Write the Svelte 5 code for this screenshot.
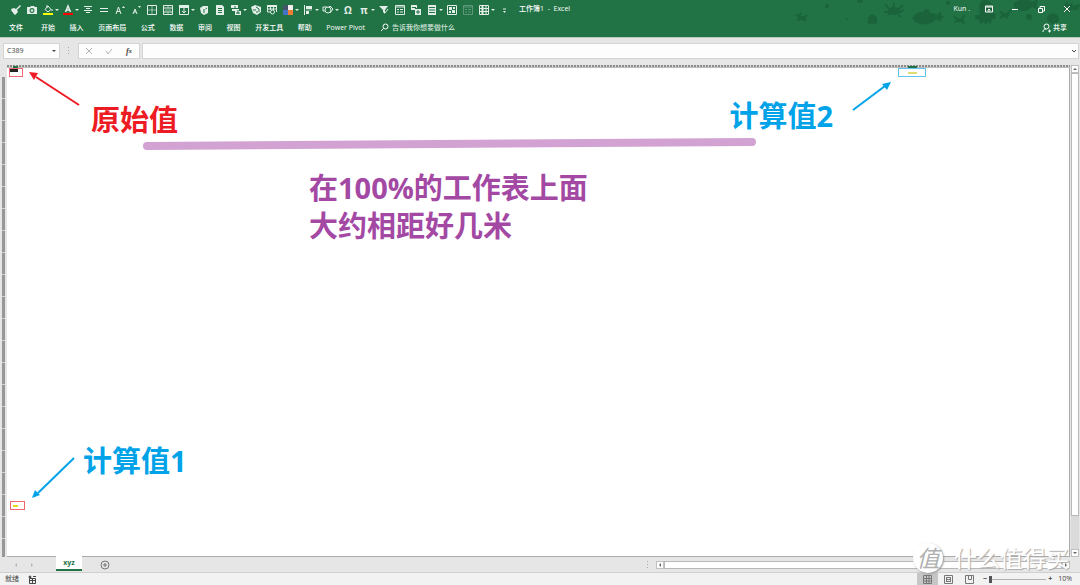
<script>
  let cellName = 'C389';
  let formula = '';
  let search = '';
  let zoom = 10;

  // quick access toolbar, in display order
  const tools = [
    { name: 'Format painter', icon: 'brush' },
    { name: 'Camera', icon: 'camera' },
    { name: 'Fill color', icon: 'fill', menu: true },
    { name: 'Font color', icon: 'font', menu: true },
    { name: 'Center', icon: 'center' },
    { name: 'Middle', icon: 'middle' },
    { name: 'Increase font', icon: 'grow' },
    { name: 'Decrease font', icon: 'shrink' },
    { name: 'Borders', icon: 'borders' },
    { name: 'Merge', icon: 'merge' },
    { name: 'Freeze', icon: 'freeze', menu: true },
    { name: 'Pivot', icon: 'cube' },
    { name: 'Page', icon: 'page' },
    { name: 'Paste', icon: 'paste', menu: true },
    { name: 'Data model', icon: 'model' },
    { name: 'Find table', icon: 'find' },
    { name: 'Colors', icon: 'colors', menu: true },
    { name: 'Align', icon: 'align', menu: true },
    { name: 'Shapes', icon: 'shapes', menu: true },
    { name: 'Symbol', text: 'Ω' },
    { name: 'Equation', text: 'π', menu: true },
    { name: 'Filter', icon: 'filter' },
    { name: 'Form', icon: 'form' },
    { name: 'Copy', icon: 'copy' },
    { name: 'Calculate', icon: 'calc', menu: true },
    { name: 'Select objects', icon: 'select' },
    { name: 'Outline', icon: 'form', off: true },
    { name: 'Table', icon: 'table', menu: true }
  ];

  const menus = ['开始', '插入', '页面布局', '公式', '数据', '审阅', '视图', '开发工具', '帮助', 'Power Pivot'];
</script>

<div class="excel">
  <header>
    <svg class="sea" width="300" height="37" viewBox="0 0 300 37" aria-hidden="true">
      <circle cx="47" cy="6" r="2" />
      <circle cx="80" cy="0" r="3" />
      <circle cx="67" cy="19" r="1" />
      <circle cx="168" cy="3" r="2" />
      <circle cx="249" cy="17" r="3" />
      <path d="M88 19c0-6 9-6 9 0v3l1 2-3-1-1 2-2-2-2 2-1-2-2 0 1-2z" />
      <path d="M133 17c2-4 6-5 10-5l2-3 4 1 1 3c3 0 5 1 7 2l4-4 0 4 3 2-3 2 0 3-5-3c-6 8-21 7-24-2z" />
      <path d="M200 11c-5-14 15-15 12 0l4 4-1 4-3 0-1 5-3-2-2 3-3-3-3 2-1-4-4-1 0-4 4 0z" />
      <path d="M233 5c3-6 14-7 19-3l6-3-1 6 1 5-6-3c-5 6-16 5-19-2z" />
      <path d="M267 18c2-7 12-6 12 2l-2 3c-3 2-9 1-10-5z" />
      <path d="M284 5l3-4 1 4 5-3-1 4 8-2-2 6-7 0-2 3-5-5z" />
      <g class="crab">
        <path d="M16 14l3 3 2-4M27 15l-3 3M17 20l3-1M26 21l-2-2" />
        <ellipse cx="22" cy="18" rx="4" ry="2" />
        <path d="M105 4l4 5M114 3l-1 6M123 5l-5 5M104 12l6 0M118 13l6-3M108 15l3-3M118 15l3 2" />
        <ellipse cx="114" cy="11" rx="6" ry="4" />
        <path d="M174 16l3 3M185 15l-4 5M174 22l4-1M182 23l3-1" />
        <ellipse cx="180" cy="20" rx="4" ry="2" />
        <path d="M220 11l3 3M231 10l-4 4M220 18l4-2M228 18l-2-2" />
        <ellipse cx="225" cy="15" rx="4" ry="2" />
      </g>
    </svg>

    <div class="titlebar">
      <div class="tools">
        {#each tools as tool}
          <button class="tool" class:off={tool.off} aria-label={tool.name}>
            {#if tool.text}
              <span class="letter">{tool.text}</span>
            {:else}
            <svg width="12" height="12" viewBox="0 0 12 12">
              {#if tool.icon == 'brush'}
                <path class="solid" d="M1 5l3-1 2 1 4-4 1 1-4 4 1 2-3 3-2-2 0-1-1 0z" />
              {:else if tool.icon == 'camera'}
                <path class="solid" fill-rule="evenodd" d="M1 3h3l1-1h3l1 1h2v7H1zM6 4a2.500 2.500 0 1 0 .01 0z" />
                <circle class="solid" cx="6" cy="6.500" r="1.300" />
              {:else if tool.icon == 'fill'}
                <path d="M3 5.500L6 2l3 3.500L6 8zM5 1v3M10 5v2" />
                <rect x="1" y="9" width="10" height="2" fill="#ffff00" />
              {:else if tool.icon == 'font'}
                <path class="heavy" d="M3.500 8L6 2l2.500 6M4.500 6h3" />
                <rect x="1" y="9" width="10" height="2" fill="#ff0000" />
              {:else if tool.icon == 'center'}
                <path d="M2 2.500h8M4 4.500h4M2 6.500h8M4 8.500h4" />
              {:else if tool.icon == 'middle'}
                <path d="M2 4.500h8M2 7.500h8" />
              {:else if tool.icon == 'grow'}
                <path d="M2 10L4.500 3 7 10M3 7.500h3" />
                <path class="solid" d="M8 4l1.500-2L11 4z" />
              {:else if tool.icon == 'shrink'}
                <path d="M3 10L5 5l2 5M4 8h2" />
                <path class="solid" d="M8 2h3L9.500 4z" />
              {:else if tool.icon == 'borders'}
                <path d="M1.500 1.500h9v9h-9z" />
                <path class="thin" d="M6 2v8M2 6h8" />
              {:else if tool.icon == 'merge'}
                <path d="M1.500 1.500h9v9h-9zM2 4h8M2 8h8" />
                <path class="thin" d="M6 2v2M6 8v2M3 6h6" />
              {:else if tool.icon == 'freeze'}
                <path d="M1.500 1.500h9v9h-9zM6 4v5M4 7l2 2 2-2" />
                <path class="solid" d="M1 1h10v3H1z" />
              {:else if tool.icon == 'cube'}
                <path class="solid" d="M2 4l3-2 5 0v7l-4 2-3-2z" />
                <path class="cut" d="M6 5v4M7.500 5L9 4" />
              {:else if tool.icon == 'page'}
                <path class="solid" d="M2 1h6l2 2v8H2z" />
                <path class="cut" d="M4 4.500h4M4 6.500h4M4 8.500h4" />
              {:else if tool.icon == 'paste'}
                <path class="solid" d="M1 1h7v3H1zM2 5h7v2H2zM5 7h6v4H5z" />
                <path class="cut" d="M5 2v2M8 6v4M6 9h4" />
              {:else if tool.icon == 'model'}
                <path class="solid" d="M1 3l4-2 6 2v5l-4 3-4-2z" />
                <path class="cut" d="M3 6h3M6 3l3 2v3M6 8h2" />
              {:else if tool.icon == 'find'}
                <path d="M1.500 3v5H4M2 5h8M4.500 3v3M7.500 3v3M10.500 3v5" />
                <path class="bold" d="M1 2h10" />
                <circle class="ring" cx="6.500" cy="8" r="2" />
              {:else if tool.icon == 'colors'}
                <rect x="1" y="1" width="5" height="5" fill="#44546a" />
                <rect x="6" y="1" width="5" height="5" fill="#f4eeee" />
                <rect x="1" y="6" width="5" height="5" fill="#4472c4" />
                <rect x="6" y="6" width="5" height="5" fill="#ed7d31" />
              {:else if tool.icon == 'align'}
                <path d="M2.500 1v10" />
                <path class="solid" d="M4 2h6v3H4zM4 7h3v3H4z" />
                <path class="thin" d="M4 6h6" />
              {:else if tool.icon == 'shapes'}
                <path d="M1 3h4v4H1zM8 2l3 3-3 4-3-4z" />
                <circle class="ring" cx="6" cy="6" r="3" />
              {:else if tool.icon == 'filter'}
                <path class="solid" d="M1 2h9L7 6v4L5 8V6z" />
                <path d="M7 9l3-4" />
              {:else if tool.icon == 'form'}
                <path d="M1.500 1.500h9v9h-9zM2 3h8M3 5.500h2M6 5.500h3M3 8h2M6 8h3" />
              {:else if tool.icon == 'copy'}
                <path class="solid" d="M1 1h6v5H1zM5 5h6v6H5z" />
                <path class="cut" d="M2 3.500h4M5 4.500h3M6 8h4M8 6v4" />
              {:else if tool.icon == 'calc'}
                <path class="solid" d="M2 1h8v10H2z" />
                <path class="cut" d="M3 3.500h6M3 6h6M3 8.500h6" />
              {:else if tool.icon == 'select'}
                <path d="M1.500 1.500h9v9h-9z" />
                <path class="solid" d="M3 3h3v3H3zM7 3h2v2H7zM6 6h3v3H6zM3 7h2v2H3z" />
              {:else}
                <path d="M1.500 1.500h9v9h-9zM1 4.500h10M1 7.500h10M8 1v10" />
                <path class="bold" d="M4.500 1v10" />
              {/if}
            </svg>
            {/if}
            {#if tool.menu}<span class="caret"></span>{/if}
          </button>
        {/each}
        <button class="tool more" aria-label="Customize toolbar">
          <svg width="12" height="12" viewBox="0 0 12 12"><path d="M5 5h3" /><path class="solid" d="M5 7h3L6.500 9z" /></svg>
        </button>
      </div>
      <span class="title">工作簿1 &nbsp;- &nbsp;Excel</span>
      <span class="user">Kun .</span>
      <div class="window">
        <button aria-label="Ribbon options">
          <svg width="10" height="10" viewBox="0 0 10 10"><path d="M1.500 2h7v6h-7zM1 3h8M5 8V5M3.500 6.500L5 5l1.500 1.500" /></svg>
        </button>
        <button aria-label="Minimize">
          <svg width="10" height="10" viewBox="0 0 10 10"><path d="M2 5.500h6" /></svg>
        </button>
        <button aria-label="Restore">
          <svg width="10" height="10" viewBox="0 0 10 10"><path d="M2.500 4.500h4v4h-4zM4 4V2.500h4.500V7H7" /></svg>
        </button>
        <button aria-label="Close">
          <svg width="10" height="10" viewBox="0 0 10 10"><path d="M2 2l6 6M8 2L2 8" /></svg>
        </button>
      </div>
    </div>

    <div class="ribbon">
      <button class="file">文件</button>
      <nav>
        {#each menus as menu}
          <button>{menu}</button>
        {/each}
      </nav>
      <label class="search">
        <svg width="9" height="9" viewBox="0 0 9 9"><circle cx="5.500" cy="3.500" r="2.500" /><path d="M3.500 5.500L1 8" /></svg>
        <input bind:value={search} placeholder="告诉我你想要做什么" aria-label="告诉我你想要做什么" />
      </label>
      <button class="share">
        <svg width="9" height="10" viewBox="0 0 9 10"><circle cx="4.500" cy="3.500" r="2.500" /><path d="M1 9c0-2 1-3 3-3M6 8h3M7.500 6.500v3" /></svg>
        共享
      </button>
    </div>
  </header>

  <div class="formula">
    <div class="box namebox">
      <input bind:value={cellName} aria-label="Name box" />
      <span class="caret"></span>
    </div>
    <span class="grip"></span>
    <div class="box actions">
      <button aria-label="Cancel"><svg width="8" height="8" viewBox="0 0 8 8"><path d="M1 1l6 6M7 1L1 7" /></svg></button>
      <button aria-label="Enter"><svg width="8" height="8" viewBox="0 0 8 8"><path d="M1 4l2 3 4-5" /></svg></button>
      <button class="fx">f<small>x</small></button>
    </div>
    <div class="box entry">
      <input bind:value={formula} aria-label="Formula" />
      <svg width="6" height="6" viewBox="0 0 6 6"><path d="M1 2l2 2 2-2" /></svg>
    </div>
  </div>

  <main>
    <div class="rows"></div>
    <div class="middle">
      <div class="columns"></div>
      <div class="sheet">
        <span class="pick"></span>
        <span class="pick far"></span>
        <span class="mark source"><i></i></span>
        <span class="mark first"><i></i></span>
        <span class="mark second"><i></i></span>

        <svg class="arrow a-source" width="54" height="38" viewBox="0 0 54 38">
          <path d="M51 35L8 7" stroke="#ed1c24" />
          <path d="M1 2l9 1-4 7z" fill="#ed1c24" />
        </svg>
        <svg class="arrow a-first" width="46" height="44" viewBox="0 0 46 44">
          <path d="M43 2L7 37" stroke="#00a2e8" />
          <path d="M1 42l3-8 5 5z" fill="#00a2e8" />
        </svg>
        <svg class="arrow a-second" width="40" height="32" viewBox="0 0 40 32">
          <path d="M1 30L33 6" stroke="#00a2e8" />
          <path d="M39 2l-9 2 5 6z" fill="#00a2e8" />
        </svg>
        <svg class="distance" height="14" viewBox="0 0 614 14" preserveAspectRatio="none">
          <path d="M5 9L609 5" />
        </svg>

        <p class="note n-source">原始值</p>
        <p class="note n-first">计算值1</p>
        <p class="note n-second">计算值2</p>
        <p class="note n-distance">在100%的工作表上面<br />大约相距好几米</p>
      </div>
    </div>
    <div class="vscroll">
      <button aria-label="Scroll up"><span class="tri up"></span></button>
      <div class="track"><div class="thumb"></div></div>
      <button aria-label="Scroll down"><span class="tri down"></span></button>
    </div>
  </main>

  <div class="sheets">
    <button class="step" aria-label="Previous sheet"><span class="tri left"></span></button>
    <button class="step" aria-label="Next sheet"><span class="tri right"></span></button>
    <button class="tab">xyz</button>
    <button class="add" aria-label="New sheet">
      <svg width="10" height="10" viewBox="0 0 10 10"><circle cx="5" cy="5" r="4" /><path d="M5 3v4M3 5h4" /></svg>
    </button>
    <span class="grip"></span>
    <div class="hscroll">
      <button aria-label="Scroll left"><span class="tri left"></span></button>
      <div class="thumb"></div>
      <button aria-label="Scroll right"><span class="tri right"></span></button>
    </div>
  </div>

  <footer>
    <span>就绪</span>
    <button class="macro" aria-label="Record macro">
      <svg width="9" height="9" viewBox="0 0 9 9"><path d="M1.500 3.500h6v5h-6zM1 5.500h6M4.500 3v5M5 1.500h3" /><circle cx="2" cy="2" r="1" fill="#444" /></svg>
    </button>
    <div class="views">
      <button class="active" aria-label="Normal"><svg width="9" height="9" viewBox="0 0 9 9"><path d="M.5.5h8v8h-8zM3.500 0v9M6 0v9M0 3.500h9M0 6h9" /></svg></button>
      <button aria-label="Page layout"><svg width="9" height="9" viewBox="0 0 9 9"><path d="M.5.5h8v8h-8zM2.500 2v5M6.500 2v5M3 2.500h3M3 4.500h3M3 6.500h3" /></svg></button>
      <button aria-label="Page break"><svg width="9" height="9" viewBox="0 0 9 9"><path d="M.5.5h8v8h-8zM3.500 0v4.500h3V0" /></svg></button>
    </div>
    <div class="zoom">
      <button aria-label="Zoom out">−</button>
      <input type="range" min="10" max="400" bind:value={zoom} aria-label="Zoom" />
      <button aria-label="Zoom in">+</button>
      <output>{zoom}%</output>
    </div>
  </footer>

  <div class="watermark">
    <span class="badge">值</span>
    <span>什么值得买</span>
  </div>
</div>

<style>
  :global(body) {
    margin: 0;
  }

  .excel {
    position: relative;
    display: flex;
    flex-direction: column;
    height: 100vh;
    overflow: hidden;
    background: #e6e6e6;
    font-family: 'Open Sans', 'Noto Sans CJK SC', sans-serif;
    font-size: 7px;
    line-height: 10px;
    color: #444;
  }

  button,
  input {
    margin: 0;
    padding: 0;
    border: none;
    background: none;
    color: inherit;
    font: inherit;
    outline: none;
  }

  button {
    display: flex;
    align-items: center;
    justify-content: center;
    white-space: nowrap;
  }

  svg {
    display: block;
    flex: none;
    fill: none;
    stroke: currentColor;
    stroke-width: 1;
  }

  header {
    position: relative;
    color: #fff;
    background: #217346;
    border-bottom: 1px solid #b5cbbd;
    font-weight: 500;
  }

  .sea {
    position: absolute;
    right: 0;
    top: 0;
    fill: #1b643b;
    stroke: none;
  }

  .crab path {
    fill: none;
    stroke: #1b643b;
    stroke-width: 2;
  }

  .titlebar {
    position: relative;
    display: flex;
    align-items: center;
    height: 18px;
  }

  .tools {
    display: flex;
    padding-left: 8px;
  }

  .tool {
    padding: 2px 2px 0;
    color: #e2eee7;
  }

  .letter {
    width: 12px;
    font-size: 10px;
    font-weight: 700;
    line-height: 12px;
    text-align: center;
  }

  .tool rect,
  .solid {
    stroke: none;
  }

  .solid {
    fill: currentColor;
  }

  .bold {
    stroke-width: 2;
  }

  .heavy {
    stroke-width: 1.5;
  }

  .thin {
    opacity: 0.6;
  }

  .cut {
    stroke: #217346;
  }

  .ring {
    fill: #217346;
  }

  .off {
    opacity: 0.3;
  }

  .caret {
    width: 0;
    margin: 0 -1px 0 1px;
    border: 2px solid transparent;
    border-top-color: currentColor;
    border-bottom: none;
  }

  .title {
    margin-left: 7px;
    white-space: nowrap;
  }

  .user {
    margin-left: auto;
  }

  .window {
    display: flex;
    gap: 16px;
    padding: 0 8px 0 14px;
  }

  .ribbon {
    position: relative;
    display: flex;
    align-items: center;
    height: 19px;
    padding: 0 13px 0 9px;
  }

  .ribbon nav {
    display: flex;
    justify-content: space-between;
    width: 324px;
    margin-left: 18px;
  }

  .search {
    display: flex;
    align-items: center;
    gap: 3px;
    margin-left: 15px;
  }

  .search input::placeholder {
    color: #d3e3da;
    opacity: 1;
  }

  .share {
    gap: 2px;
    margin-left: auto;
  }

  .formula {
    display: flex;
    gap: 2px;
    padding: 5px 1px 6px 3px;
  }

  .box {
    display: flex;
    align-items: center;
    height: 14px;
    border: 1px solid #d4d4d4;
    background: #fdfdfd;
  }

  .namebox {
    width: 55px;
  }

  .namebox input {
    width: 44px;
    padding-left: 3px;
  }

  .grip {
    width: 2px;
    height: 8px;
    margin: auto 6px;
    background: repeating-linear-gradient(#aaa 0 1px, transparent 1px 3px);
    background-size: 1px 100%;
    background-repeat: no-repeat;
  }

  .actions {
    gap: 12px;
    padding: 0 6px;
    color: #b4b4b4;
  }

  .actions button {
    width: 8px;
  }

  .actions .fx {
    color: #444;
    font: italic bold 8px 'Liberation Serif', serif;
  }

  .fx small {
    font-size: 7px;
  }

  .entry {
    flex: 1;
    padding-right: 1px;
  }

  .entry input {
    flex: 1;
  }

  main {
    display: flex;
    flex: 1;
    min-height: 0;
  }

  .rows {
    width: 3px;
    margin: 12px 2px 0 2px;
    background: repeating-linear-gradient(#979797 0 21px, #d0d0d0 21px 22px);
  }

  .middle {
    display: flex;
    flex: 1;
    flex-direction: column;
  }

  .columns {
    height: 2px;
    border-bottom: 1px solid #bcbcbc;
    background: repeating-linear-gradient(90deg, #8c8c8c 0 2px, #dcdcdc 2px 3px);
  }

  .sheet {
    position: relative;
    flex: 1;
    background: #fff;
    border-right: 1px solid #ababab;
    border-bottom: 1px solid #ababab;
  }

  /* selected column headers */
  .pick {
    position: absolute;
    left: 6px;
    top: -2px;
    width: 5px;
    height: 2px;
    background: #217346;
  }

  .pick.far {
    left: auto;
    right: 152px;
    width: 9px;
  }

  .mark {
    position: absolute;
    display: flex;
    align-items: center;
    justify-content: center;
    width: 12px;
    height: 7px;
    border: 1px solid #f0686d;
  }

  .mark i {
    width: 5px;
    height: 2px;
    background: #e4d820;
  }

  .source {
    left: 2px;
    top: 0;
  }

  .source i {
    width: 8px;
    height: 3px;
    margin: 0 auto auto 0;
    background: #222;
  }

  .first {
    left: 3px;
    bottom: 46px;
    width: 13px;
  }

  .first i {
    margin-right: 4px;
  }

  .second {
    right: 143px;
    top: 0;
    width: 26px;
    border-color: #62c4ee;
  }

  .second i {
    width: 9px;
    background: #dfdc70;
  }

  .arrow,
  .distance {
    position: absolute;
    stroke-width: 2;
  }

  .arrow path + path {
    stroke: none;
  }

  .a-source {
    left: 21px;
    top: 2px;
  }

  .a-first {
    left: 24px;
    bottom: 56px;
  }

  .a-second {
    right: 177px;
    top: 12px;
  }

  .distance {
    left: 135px;
    top: 69px;
    width: calc(100% - 447px);
    stroke: #d2a2d2;
    stroke-width: 8;
    stroke-linecap: round;
  }

  .note {
    position: absolute;
    margin: 0;
    font-size: 29px;
    font-weight: 700;
    line-height: 38px;
    white-space: nowrap;
    color: #00a2e8;
  }

  .n-source {
    left: 84px;
    top: 33px;
    color: #ed1c24;
  }

  .n-first {
    left: 76px;
    bottom: 76px;
  }

  .n-second {
    right: 236px;
    top: 29px;
  }

  .n-distance {
    left: 302px;
    top: 101px;
    color: #a349a4;
  }

  .vscroll {
    display: flex;
    flex-direction: column;
    width: 8px;
    margin: 0 1px;
  }

  .vscroll button,
  .hscroll button {
    width: 8px;
    height: 8px;
    border: 1px solid #c0c0c0;
    background: #fdfdfd;
    box-sizing: border-box;
    flex: none;
  }

  .track {
    flex: 1;
    background: #dadada;
  }

  .thumb {
    box-sizing: border-box;
    border: 1px solid #b8b8b8;
    background: #fff;
  }

  .track .thumb {
    height: 93%;
  }

  .tri {
    border: 2px solid transparent;
    color: #666;
  }

  .up {
    border-top: none;
    border-bottom-color: currentColor;
  }

  .down {
    border-bottom: none;
    border-top-color: currentColor;
  }

  .left {
    border-left: none;
    border-right-color: currentColor;
  }

  .right {
    border-right: none;
    border-left-color: currentColor;
  }

  .sheets {
    display: flex;
    height: 16px;
    padding: 0 10px 0 8px;
    border-bottom: 1px solid #d0d0d0;
    box-sizing: border-box;
  }

  .step {
    width: 16px;
  }

  .step .tri {
    color: #b4b4b4;
  }

  .tab {
    width: 26px;
    margin: -1px 18px 1px 16px;
    color: #217346;
    font-weight: 700;
    background: #fff;
    border-bottom: 2px solid #217346;
    z-index: 1;
  }

  .add {
    color: #777;
  }

  .sheets .grip {
    margin-left: auto;
    margin-right: 7px;
  }

  .hscroll {
    display: flex;
    align-items: center;
    width: 39%;
  }

  .hscroll .thumb {
    flex: 1;
    height: 8px;
  }

  footer {
    display: flex;
    align-items: center;
    height: 12px;
    padding: 0 8px 0 5px;
    background: #f2f2f2;
  }

  .macro {
    margin-left: 9px;
  }

  .views {
    display: flex;
    margin-left: auto;
    color: #777;
  }

  .views button {
    width: 21px;
    height: 12px;
  }

  .views .active {
    background: #c6c6c6;
  }

  .zoom {
    display: flex;
    align-items: center;
    gap: 2px;
    margin-left: 3px;
  }

  .zoom button {
    width: 4px;
    font-weight: 700;
  }

  .zoom output {
    margin-left: 4px;
  }

  .zoom input {
    appearance: none;
    width: 57px;
    height: 8px;
    background: linear-gradient(#b0b0b0, #b0b0b0) center / 100% 1px no-repeat;
  }

  .zoom input::-webkit-slider-thumb {
    appearance: none;
    width: 3px;
    height: 7px;
    background: #555;
  }

  .watermark {
    position: absolute;
    right: 11px;
    bottom: 12px;
    display: flex;
    align-items: center;
    gap: 11px;
    font-size: 23px;
    line-height: 30px;
    color: #fff;
    text-shadow: 1px 1px 1px #aaa;
    pointer-events: none;
    z-index: 2;
  }

  .badge {
    width: 30px;
    height: 30px;
    border-radius: 50%;
    text-align: center;
    color: #b0b0b0;
    font-style: italic;
    background: #fff;
    box-shadow: 1px 1px 2px #999;
    text-shadow: none;
  }
</style>
